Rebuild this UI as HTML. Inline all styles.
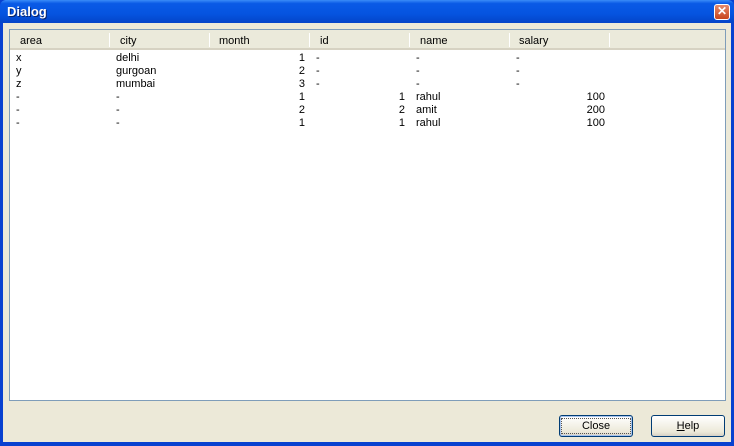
<!DOCTYPE html>
<html><head><style>
*{margin:0;padding:0;box-sizing:border-box}
body{width:734px;height:446px;overflow:hidden;background:#0841d0;font-family:"Liberation Sans",sans-serif;font-size:11px;position:relative}
.title{position:absolute;left:0;top:0;width:734px;height:23px;background:linear-gradient(#3a8cf8 0%,#0a5ae6 15%,#0554e0 60%,#0444c8 100%);border-radius:6px 6px 0 0}
.title span{position:absolute;left:7px;top:4px;color:#fff;font-weight:bold;font-size:13px;text-shadow:1px 1px #0a246a}
.x{position:absolute;left:714px;top:4px;width:16px;height:16px;background:linear-gradient(#e58a6c,#c8451c);border:1px solid #fff;border-radius:3px;color:#fff;font-size:12px;font-weight:bold;line-height:13px;text-align:center}
.client{position:absolute;left:3px;top:23px;width:728px;height:419px;background:#ece9d8}
.list{position:absolute;left:9px;top:29px;width:717px;height:372px;background:#fff;border:1px solid #7f9db9}
.hdr{position:absolute;left:0;top:0;width:715px;height:20px;background:#ebeadb;border-bottom:2px solid #d6d2c2}
.h{position:absolute;top:5px}
.sep{position:absolute;top:3px;width:1px;height:14px;background:#c7c5b2;border-right:1px solid #fff}
.c{position:absolute;white-space:nowrap}
.btn{position:absolute;top:415px;width:74px;height:22px;border:1px solid #003c74;border-radius:3px;background:linear-gradient(#fff,#ece9d8 80%,#d6d0c5);text-align:center;line-height:21px;font-size:11px}
</style></head><body>
<div class="title"><span>Dialog</span><div class="x">✕</div></div>
<div class="client"></div>
<div class="list">
<div class="hdr">
<div class="h" style="left:10px">area</div>
<div class="h" style="left:110px">city</div>
<div class="h" style="left:209px">month</div>
<div class="h" style="left:310px">id</div>
<div class="h" style="left:410px">name</div>
<div class="h" style="left:509px">salary</div>
<div class="sep" style="left:99px"></div>
<div class="sep" style="left:199px"></div>
<div class="sep" style="left:299px"></div>
<div class="sep" style="left:399px"></div>
<div class="sep" style="left:499px"></div>
<div class="sep" style="left:599px"></div>
</div>
</div>
<div id="rows"></div>
<script>
var r=[["x","delhi","1","-","-","-"],["y","gurgoan","2","-","-","-"],["z","mumbai","3","-","-","-"],["-","-","1","1","rahul","100"],["-","-","2","2","amit","200"],["-","-","1","1","rahul","100"]];
var h="";
r.forEach(function(a,i){var t=52+i*13;
h+='<div class="c" style="left:16px;top:'+t+'px">'+a[0]+'</div>';
h+='<div class="c" style="left:116px;top:'+t+'px">'+a[1]+'</div>';
h+='<div class="c" style="right:429px;top:'+t+'px">'+a[2]+'</div>';
if(a[3]=="-")h+='<div class="c" style="left:316px;top:'+t+'px">-</div>';else h+='<div class="c" style="right:329px;top:'+t+'px">'+a[3]+'</div>';
h+='<div class="c" style="left:416px;top:'+t+'px">'+a[4]+'</div>';
if(a[5]=="-")h+='<div class="c" style="left:516px;top:'+t+'px">-</div>';else h+='<div class="c" style="right:129px;top:'+t+'px">'+a[5]+'</div>';
});
document.getElementById("rows").innerHTML=h;
</script>
<div class="btn" style="left:559px;box-shadow:inset 0 0 0 1px #a8c4ee"><span style="outline:1px dotted #555;padding:1px 20px">Close</span></div>
<div class="btn" style="left:651px"><u>H</u>elp</div>
</body></html>
